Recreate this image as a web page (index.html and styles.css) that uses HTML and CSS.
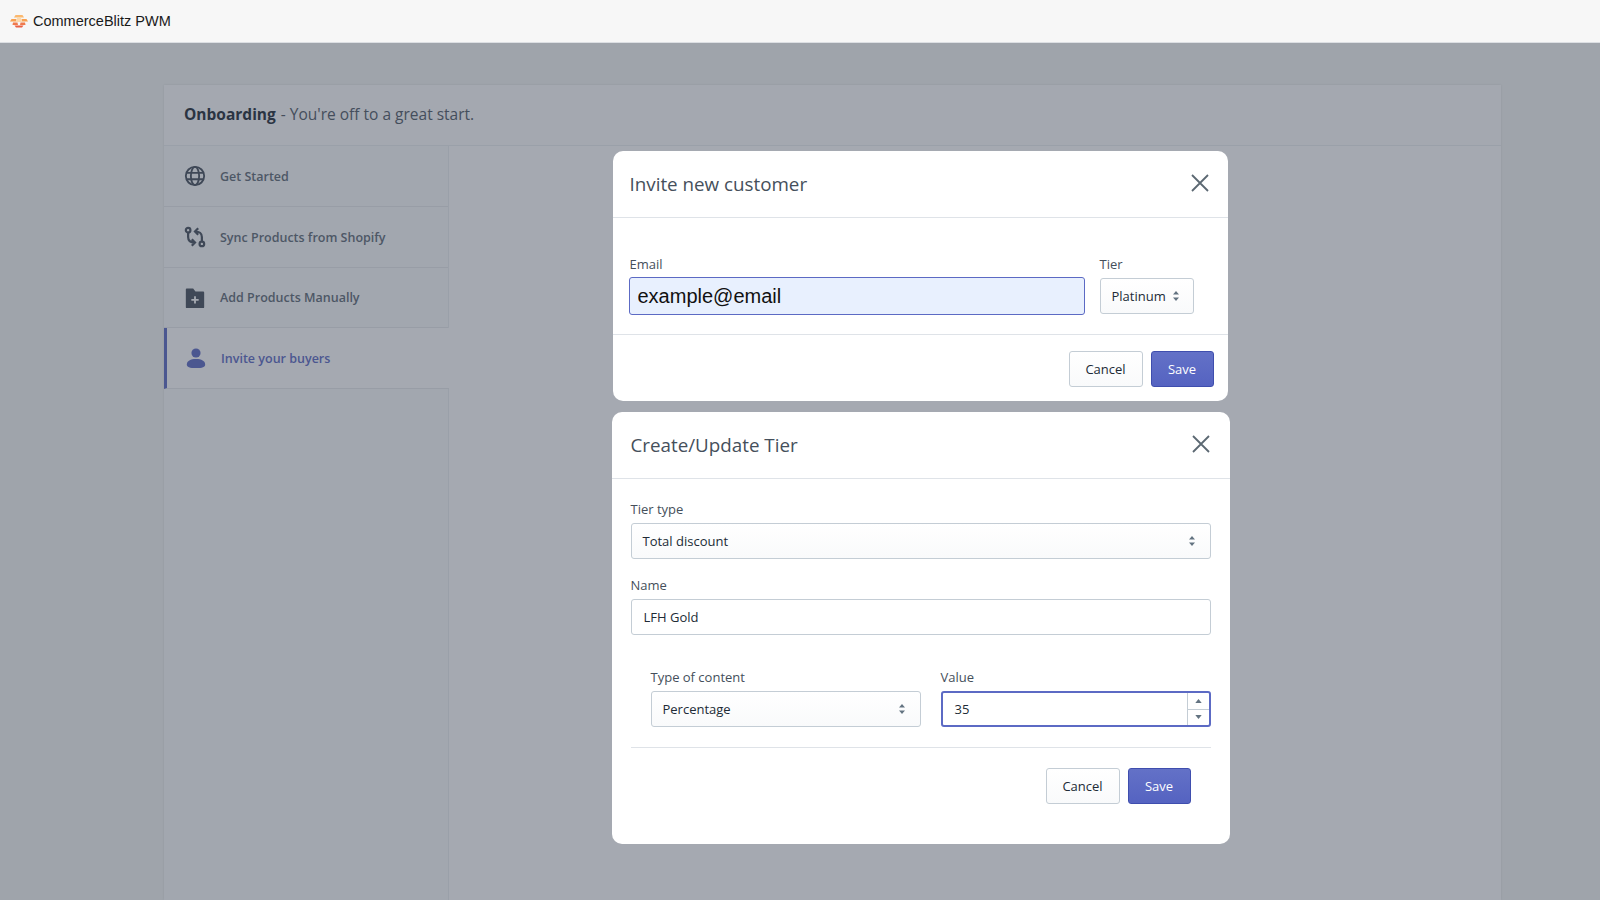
FILE: index.html
```html
<!DOCTYPE html>
<html lang="en">
<head>
  <meta charset="UTF-8">
  <meta name="viewport" content="width=device-width, initial-scale=1.0">
  <title>CommerceBlitz PWM</title>
  <link rel="stylesheet" href="styles.css">
</head>
<body>

<nav class="navbar">
  <svg class="logo" viewBox="0 0 18 14" width="18" height="14">
    <path d="M5.500 1h7l1.500 2.500H4z" fill="#fbb96f"/>
    <path d="M1.500 5h5l-.5 2.500H0zM11.500 5h5L18 7.500h-6z" fill="#f8a04f"/>
    <path d="M7 4h4l1 4H6z" fill="#fcd9ae"/>
    <path d="M3 8.500h4.500l.5 2.500H2.500zM10.500 8.500H15l.5 2.500H10z" fill="#f07a4c"/>
    <path d="M4.500 11.500h9L12 13.500H6z" fill="#ea5f42"/>
  </svg>
  <span class="brand">CommerceBlitz PWM</span>
</nav>

<div class="page">
  <div class="card">
    <div class="card-header"><b>Onboarding</b> - You're off to a great start.</div>
    <div class="card-body">
      <ul class="steps">
        <li>
          <svg viewBox="0 0 24 24" width="22" height="22" fill="none" stroke="#454f5b" stroke-width="2"><circle cx="12" cy="12" r="10"/><ellipse cx="12" cy="12" rx="4.500" ry="10"/><path d="M2.500 8.500h19M2.500 15.500h19"/></svg>
          Get Started
        </li>
        <li>
          <svg viewBox="0 0 24 24" width="22" height="22" fill="none" stroke="#454f5b" stroke-width="2.400"><circle cx="4.500" cy="4.500" r="2.500"/><circle cx="19.500" cy="19.500" r="2.500"/><path d="M4.500 7v5c0 4 3 6 7 6M8.500 14.500l3.500 3.500-3.500 3.500M19.500 17v-5c0-4-3-6-7-6M15.500 9.500L12 6l3.500-3.500"/></svg>
          Sync Products from Shopify
        </li>
        <li>
          <svg viewBox="0 0 24 24" width="22" height="22"><path d="M3 1.500h7l2.500 3.500H21a1 1 0 0 1 1 1v16a1 1 0 0 1-1 1H3a1 1 0 0 1-1-1V2.500a1 1 0 0 1 1-1z" fill="#454f5b"/><path d="M12 10v8M8 14h8" stroke="#fff" stroke-width="2"/></svg>
          Add Products Manually
        </li>
        <li class="active">
          <svg viewBox="0 0 24 24" width="22" height="22" fill="#5c6ac4"><circle cx="12" cy="6.500" r="5"/><path d="M2 19c0-4 4-6 10-6s10 2 10 6c0 3-3 4-10 4S2 22 2 19z"/></svg>
          Invite your buyers
        </li>
      </ul>
    </div>
  </div>
</div>

<div class="overlay">
  <div class="modal modal-invite">
    <div class="modal-header">
      <h2>Invite new customer</h2>
      <svg class="close" viewBox="0 0 18 18" width="18" height="18"><path d="M1 1l16 16M17 1L1 17"/></svg>
    </div>
    <div class="modal-body invite-body">
      <div class="field grow">
        <label>Email</label>
        <input class="input autofill" type="text" value="example@email">
      </div>
      <div class="field">
        <label>Tier</label>
        <div class="select tier-select">Platinum
          <svg class="updown" viewBox="0 0 8 12" width="8" height="12"><path d="M4 1l3 3.500H1zM4 11L1 7.500h6z"/></svg>
        </div>
      </div>
    </div>
    <div class="modal-footer">
      <button class="btn">Cancel</button>
      <button class="btn primary">Save</button>
    </div>
  </div>

  <div class="modal modal-tier">
    <div class="modal-header">
      <h2>Create/Update Tier</h2>
      <svg class="close" viewBox="0 0 18 18" width="18" height="18"><path d="M1 1l16 16M17 1L1 17"/></svg>
    </div>
    <div class="modal-body tier-body">
      <div class="field">
        <label>Tier type</label>
        <div class="select">Total discount
          <svg class="updown" viewBox="0 0 8 12" width="8" height="12"><path d="M4 1l3 3.500H1zM4 11L1 7.500h6z"/></svg>
        </div>
      </div>
      <div class="field">
        <label>Name</label>
        <input class="input" type="text" value="LFH Gold">
      </div>
      <div class="value-row">
        <div class="field">
          <label>Type of content</label>
          <div class="select">Percentage
            <svg class="updown" viewBox="0 0 8 12" width="8" height="12"><path d="M4 1l3 3.500H1zM4 11L1 7.500h6z"/></svg>
          </div>
        </div>
        <div class="field">
          <label>Value</label>
          <div class="number">
            <span class="number-value">35</span>
            <div class="spinner">
              <span><svg viewBox="0 0 8 5" width="7" height="4"><path d="M4 0l4 5H0z"/></svg></span>
              <span><svg viewBox="0 0 8 5" width="7" height="4"><path d="M4 5L0 0h8z"/></svg></span>
            </div>
          </div>
        </div>
      </div>
      <div class="tier-footer">
        <button class="btn">Cancel</button>
        <button class="btn primary">Save</button>
      </div>
    </div>
  </div>
</div>

</body>
</html>
```

FILE: styles.css
```css
* {
  margin: 0;
  padding: 0;
  box-sizing: border-box;
}

body {
  height: 900px;
  overflow: hidden;
  background: #f4f6f4;
  font-family: "Open Sans", "Noto Sans", sans-serif;
  font-size: 13px;
  color: #212b36;
}

.navbar {
  display: flex;
  align-items: center;
  gap: 5px;
  height: 43px;
  padding: 0 10px;
  background: #f7f7f7;
  border-bottom: 1px solid #dcdfe3;
  position: relative;
  z-index: 2;
}

.brand {
  font-family: "Liberation Sans", sans-serif;
  font-size: 14.500px;
  color: #1a1a1a;
}

.page {
  padding: 42px 99px 0 164px;
}

.card {
  background: #fff;
  height: 815px;
  box-shadow: 0 0 2px rgba(33, 43, 54, 0.12);
  display: flex;
  flex-direction: column;
}

.card-header {
  height: 61px;
  display: flex;
  align-items: center;
  gap: 5px;
  padding: 0 20px 2px;
  font-size: 15.500px;
  color: #4f5965;
  background: #fdfdfd;
  border-bottom: 1px solid #eceef0;
}

.card-header b {
  color: #212b36;
}

.card-body {
  flex: 1;
  display: flex;
}

.steps {
  width: 285px;
  list-style: none;
  background: #fafbfb;
  border-right: 1px solid #eceef0;
}

.steps li {
  display: flex;
  align-items: center;
  gap: 14px;
  height: 61px;
  padding: 0 0 0 20px;
  font-size: 12.500px;
  font-weight: 600;
  color: #5f6b76;
  border-bottom: 1px solid #e8eaec;
}

.steps li:nth-child(3) {
  height: 60px;
}

.steps li.active {
  color: #5c6ac4;
  background: #fff;
  border-left: 3px solid #5c6ac4;
  padding-left: 18px;
  margin-right: -1px;
}

.overlay {
  position: absolute;
  top: 43px;
  left: 0;
  right: 0;
  bottom: 0;
  z-index: 1;
  background: rgba(55, 64, 82, 0.45);
  display: flex;
  flex-direction: column;
  align-items: center;
  padding: 108px 0 0 241px;
  gap: 11px;
}

.modal {
  background: #fff;
  border-radius: 10px;
}

.modal-invite {
  width: 615px;
  margin-left: -1px;
  height: 250px;
}

.modal-tier {
  width: 618px;
  height: 432px;
}

.modal-header {
  display: flex;
  align-items: center;
  justify-content: space-between;
  height: 67px;
  padding: 0 19px 0 17px;
  border-bottom: 1px solid #dfe3e8;
}

.modal-tier .modal-header {
  padding: 0 20px 0 19px;
}

.modal-header h2 {
  font-size: 18.800px;
  font-weight: 400;
  color: #454f5b;
}

.close {
  margin-bottom: 2px;
}

.close path {
  stroke: #5b6872;
  stroke-width: 1.800;
  fill: none;
}

.field {
  display: flex;
  flex-direction: column;
}

.field label {
  font-size: 13px;
  line-height: 18px;
  margin-bottom: 5px;
  color: #454f5b;
}

.grow {
  flex: 1;
}

.invite-body {
  display: flex;
  gap: 14px;
  height: 117px;
  padding: 37px 34px 0 16px;
  border-bottom: 1px solid #dfe3e8;
}

.invite-body .field label {
  margin-left: 1px;
}

.input, .select, .number {
  height: 36px;
  border: 1px solid #c4cdd5;
  border-radius: 3px;
  background: #fff;
  font-family: inherit;
  font-size: 13px;
  color: #212b36;
}

.input {
  width: 100%;
  padding: 0 12px;
}

.autofill {
  height: 38px;
  margin-top: -1px;
  padding: 0 8px;
  background: #e8f0fe;
  border-color: #5c6ac4;
  font-family: "Liberation Sans", sans-serif;
  font-size: 20px;
  color: #111;
}

.select {
  display: flex;
  align-items: center;
  justify-content: space-between;
  padding: 0 14px 0 11px;
  background: linear-gradient(to bottom, #fff, #f9fafb);
}

.tier-select {
  width: 94px;
  padding: 0 13px 0 11px;
  margin-left: 1px;
}

.updown path {
  fill: #637381;
}

.modal-footer {
  display: flex;
  justify-content: flex-end;
  gap: 8px;
  padding: 16px 14px 0 0;
}

.btn {
  width: 74px;
  height: 36px;
  border: 1px solid #c4cdd5;
  border-radius: 3px;
  background: linear-gradient(to bottom, #fff, #f9fafb);
  font-family: inherit;
  font-size: 13px;
  color: #212b36;
}

.btn.primary {
  width: 63px;
  border-color: #3f4eae;
  background: linear-gradient(to bottom, #6371c7, #5563c1);
  color: #fff;
}

.tier-body {
  padding: 21px 19px 0 19px;
}

.tier-body .field {
  margin-bottom: 17px;
}

.value-row {
  display: flex;
  gap: 20px;
  padding: 16px 0 20px 20px;
  border-bottom: 1px solid #dfe3e8;
}

.value-row .field {
  flex: 1;
  margin-bottom: 0;
}

.number {
  display: flex;
  align-items: stretch;
  border: 2px solid #5c6ac4;
}

.number-value {
  flex: 1;
  display: flex;
  align-items: center;
  padding-left: 12px;
}

.spinner {
  width: 22px;
  border-left: 1px solid #c4cdd5;
  display: flex;
  flex-direction: column;
}

.spinner span {
  flex: 1;
  display: flex;
  align-items: center;
  justify-content: center;
}

.spinner span + span {
  border-top: 1px solid #c4cdd5;
}

.spinner path {
  fill: #637381;
}

.tier-footer {
  display: flex;
  justify-content: flex-end;
  gap: 8px;
  padding: 20px 20px 0 0;
}
```
